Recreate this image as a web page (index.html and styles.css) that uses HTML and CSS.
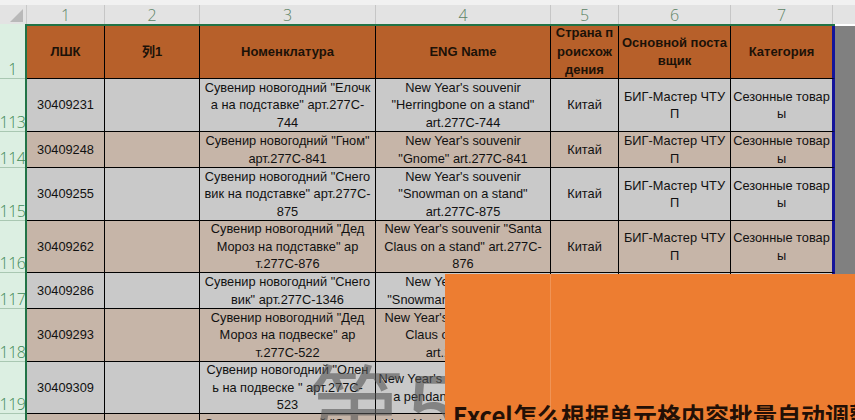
FILE: index.html
```html
<!DOCTYPE html>
<html lang="ru">
<head>
<meta charset="utf-8">
<title>Sheet</title>
<link rel="stylesheet" href="styles.css">
</head>
<body>
<div class="app">
  <div class="topstrip"></div>
  <div class="colheads">
    <div class="corner"><div class="tri"></div></div>
    <div class="ch w1">1</div>
    <div class="ch w2">2</div>
    <div class="ch w3">3</div>
    <div class="ch w4">4</div>
    <div class="ch w5">5</div>
    <div class="ch w6">6</div>
    <div class="ch w7">7</div>
    <div class="ch rest"></div>
  </div>
  <div class="main">
    <div class="rowheads">
      <div class="rh h53">1</div>
      <div class="rh h53">113</div>
      <div class="rh h36">114</div>
      <div class="rh h53">115</div>
      <div class="rh h52">116</div>
      <div class="rh h36">117</div>
      <div class="rh h53">118</div>
      <div class="rh h52">119</div>
      <div class="rh h53">120</div>
    </div>
    <div class="frame">
      <div class="row head h53">
        <div class="c c1">ЛШК</div>
        <div class="c c2">列1</div>
        <div class="c c3">Номенклатура</div>
        <div class="c c4">ENG Name</div>
        <div class="c c5">Страна п<br>роисхож<br>дения</div>
        <div class="c c6">Основной поста<br>вщик</div>
        <div class="c c7">Категория</div>
      </div>
      <div class="row gray h53">
        <div class="c c1">30409231</div>
        <div class="c c2"></div>
        <div class="c c3">Сувенир новогодний "Елочк<br>а на подставке" арт.277С-<br>744</div>
        <div class="c c4">New Year's souvenir<br>"Herringbone on a stand"<br>art.277C-744</div>
        <div class="c c5">Китай</div>
        <div class="c c6">БИГ-Мастер ЧТУ<br>П</div>
        <div class="c c7">Сезонные товар<br>ы</div>
      </div>
      <div class="row tan h36">
        <div class="c c1">30409248</div>
        <div class="c c2"></div>
        <div class="c c3">Сувенир новогодний "Гном"<br>арт.277С-841</div>
        <div class="c c4">New Year's souvenir<br>"Gnome" art.277C-841</div>
        <div class="c c5">Китай</div>
        <div class="c c6">БИГ-Мастер ЧТУ<br>П</div>
        <div class="c c7">Сезонные товар<br>ы</div>
      </div>
      <div class="row gray h53">
        <div class="c c1">30409255</div>
        <div class="c c2"></div>
        <div class="c c3">Сувенир новогодний "Снего<br>вик на подставке" арт.277С-<br>875</div>
        <div class="c c4">New Year's souvenir<br>"Snowman on a stand"<br>art.277C-875</div>
        <div class="c c5">Китай</div>
        <div class="c c6">БИГ-Мастер ЧТУ<br>П</div>
        <div class="c c7">Сезонные товар<br>ы</div>
      </div>
      <div class="row tan h52">
        <div class="c c1">30409262</div>
        <div class="c c2"></div>
        <div class="c c3">Сувенир новогодний "Дед<br>Мороз на подставке" ар<br>т.277С-876</div>
        <div class="c c4">New Year's souvenir "Santa<br>Claus on a stand" art.277C-<br>876</div>
        <div class="c c5">Китай</div>
        <div class="c c6">БИГ-Мастер ЧТУ<br>П</div>
        <div class="c c7">Сезонные товар<br>ы</div>
      </div>
      <div class="row gray h36">
        <div class="c c1">30409286</div>
        <div class="c c2"></div>
        <div class="c c3">Сувенир новогодний "Снего<br>вик" арт.277С-1346</div>
        <div class="c c4">New Year's souvenir<br>"Snowman" art.277C-1346</div>
        <div class="c c5">Китай</div>
        <div class="c c6">БИГ-Мастер ЧТУ<br>П</div>
        <div class="c c7">Сезонные товар<br>ы</div>
      </div>
      <div class="row tan h53">
        <div class="c c1">30409293</div>
        <div class="c c2"></div>
        <div class="c c3">Сувенир новогодний "Дед<br>Мороз на подвеске" ар<br>т.277С-522</div>
        <div class="c c4">New Year's souvenir "Santa<br>Claus on a pendant"<br>art.277C-522</div>
        <div class="c c5">Китай</div>
        <div class="c c6">БИГ-Мастер ЧТУ<br>П</div>
        <div class="c c7">Сезонные товар<br>ы</div>
      </div>
      <div class="row gray h52">
        <div class="c c1">30409309</div>
        <div class="c c2"></div>
        <div class="c c3">Сувенир новогодний "Олен<br>ь на подвеске " арт.277С-<br>523</div>
        <div class="c c4">New Year's souvenir "Deer on<br>a pendant" art.277C-523</div>
        <div class="c c5">Китай</div>
        <div class="c c6">БИГ-Мастер ЧТУ<br>П</div>
        <div class="c c7">Сезонные товар<br>ы</div>
      </div>
      <div class="row tan h53 last">
        <div class="c c1">30409316</div>
        <div class="c c2"></div>
        <div class="c c3">Сувенир новогодний "Санта<br>на подвеске" арт.277С-<br>524</div>
        <div class="c c4">New Year's souvenir "Santa<br>on a pendant" art.277C-<br>524</div>
        <div class="c c5">Китай</div>
        <div class="c c6">БИГ-Мастер ЧТУ<br>П</div>
        <div class="c c7">Сезонные товар<br>ы</div>
      </div>
    </div>
    <div class="side"></div>
  </div>

  <div class="watermark">第5</div>
  <div class="banner">
    <div class="banner-line"></div>
    <div class="banner-title">Excel怎么根据单元格内容批量自动调整</div>
  </div>
</div>
</body>
</html>
```

FILE: styles.css
```css
html, body {
  margin: 0;
  padding: 0;
}
body {
  width: 855px;
  height: 420px;
  overflow: hidden;
  background: #ffffff;
  font-family: "Liberation Sans", Arial, "Noto Sans CJK SC", sans-serif;
}
.app {
  position: relative;
  width: 855px;
  height: 420px;
  overflow: hidden;
}
.topstrip {
  height: 5px;
  background: #f1f1f1;
}
.colheads {
  display: flex;
  height: 19px;
  background: #e3e3e3;
}
.corner {
  width: 27px;
  flex: none;
  position: relative;
  border-right: 1px solid #c9c9c9;
  box-sizing: border-box;
}
.tri {
  position: absolute;
  right: 3px;
  bottom: 2px;
  width: 0;
  height: 0;
  border-left: 13px solid transparent;
  border-bottom: 13px solid #b9b9b9;
}
.ch {
  flex: none;
  box-sizing: border-box;
  border-right: 1px solid #c6c6c6;
  text-align: center;
  font-size: 16px;
  line-height: 21px;
  color: #5d8466;
  font-family: "Open Sans", "Liberation Sans", sans-serif;
  font-weight: 300;
}
.ch.rest {
  flex: 1;
  border-right: none;
}
.w1 { width: 78px; }
.w2 { width: 95px; }
.w3 { width: 176px; }
.w4 { width: 175px; }
.w5 { width: 68px; }
.w6 { width: 112px; }
.w7 { width: 102px; }

.main {
  display: flex;
  align-items: flex-start;
}
.rowheads {
  width: 25px;
  flex: none;
  padding-top: 2px;
  background: #dcefe2;
  height: 400px;
}
.rh {
  box-sizing: border-box;
  border-bottom: 1px solid #a9c7b2;
  display: flex;
  align-items: flex-end;
  justify-content: center;
  font-size: 16px;
  line-height: 18px;
  color: #3f8a57;
  font-family: "Open Sans", "Liberation Sans", sans-serif;
  font-weight: 300;
  white-space: nowrap;
  overflow: visible;
  letter-spacing: -0.5px;
}
.h53 { height: 53px; }
.h52 { height: 52px; }
.h36 { height: 36px; }

.frame {
  flex: none;
  border-left: 2px solid #217346;
  border-top: 2px solid #217346;
}
.row {
  display: flex;
}
.row.gray { background: #c9c9c9; }
.row.tan { background: #c6b5a8; }
.row.head {
  background: #b7602a;
}
.c {
  flex: none;
  box-sizing: border-box;
  border-right: 1px solid #000;
  border-bottom: 1px solid #000;
  display: flex;
  align-items: center;
  justify-content: center;
  text-align: center;
  white-space: nowrap;
  overflow: hidden;
  font-size: 12.8px;
  line-height: 17.5px;
  color: #111111;
}
.row.last .c {
  padding-top: 3px;
}
.row.head .c {
  font-weight: bold;
  font-size: 13px;
  line-height: 18.5px;
  color: #1c1208;
}
.c1 { width: 78px; }
.c2 { width: 95px; }
.c3 { width: 176px; }
.c4 { width: 175px; }
.c5 { width: 68px; }
.c6 { width: 112px; }
.c7 { width: 104px; border-right: 3px solid #14149a; }

.side {
  flex: 1;
  height: 400px;
  margin-top: 2px;
  background: #808080;
}

.watermark {
  position: absolute;
  left: 305px;
  top: 356px;
  font-family: "Noto Sans CJK SC", sans-serif;
  font-weight: normal;
  font-size: 100px;
  line-height: 100px;
  color: rgba(85, 85, 85, 0.6);
  white-space: nowrap;
}
.banner {
  position: absolute;
  left: 445px;
  top: 274px;
  width: 410px;
  height: 146px;
  background: #ed7d31;
  overflow: hidden;
}
.banner-line {
  position: absolute;
  left: 105px;
  top: 0;
  width: 1px;
  height: 146px;
  background: rgba(255, 255, 255, 0.18);
}
.banner-title {
  position: absolute;
  left: 8px;
  top: 124px;
  font-family: "Noto Sans CJK SC", sans-serif;
  font-weight: bold;
  font-size: 24px;
  line-height: 34px;
  color: #231006;
  white-space: nowrap;
}
```
